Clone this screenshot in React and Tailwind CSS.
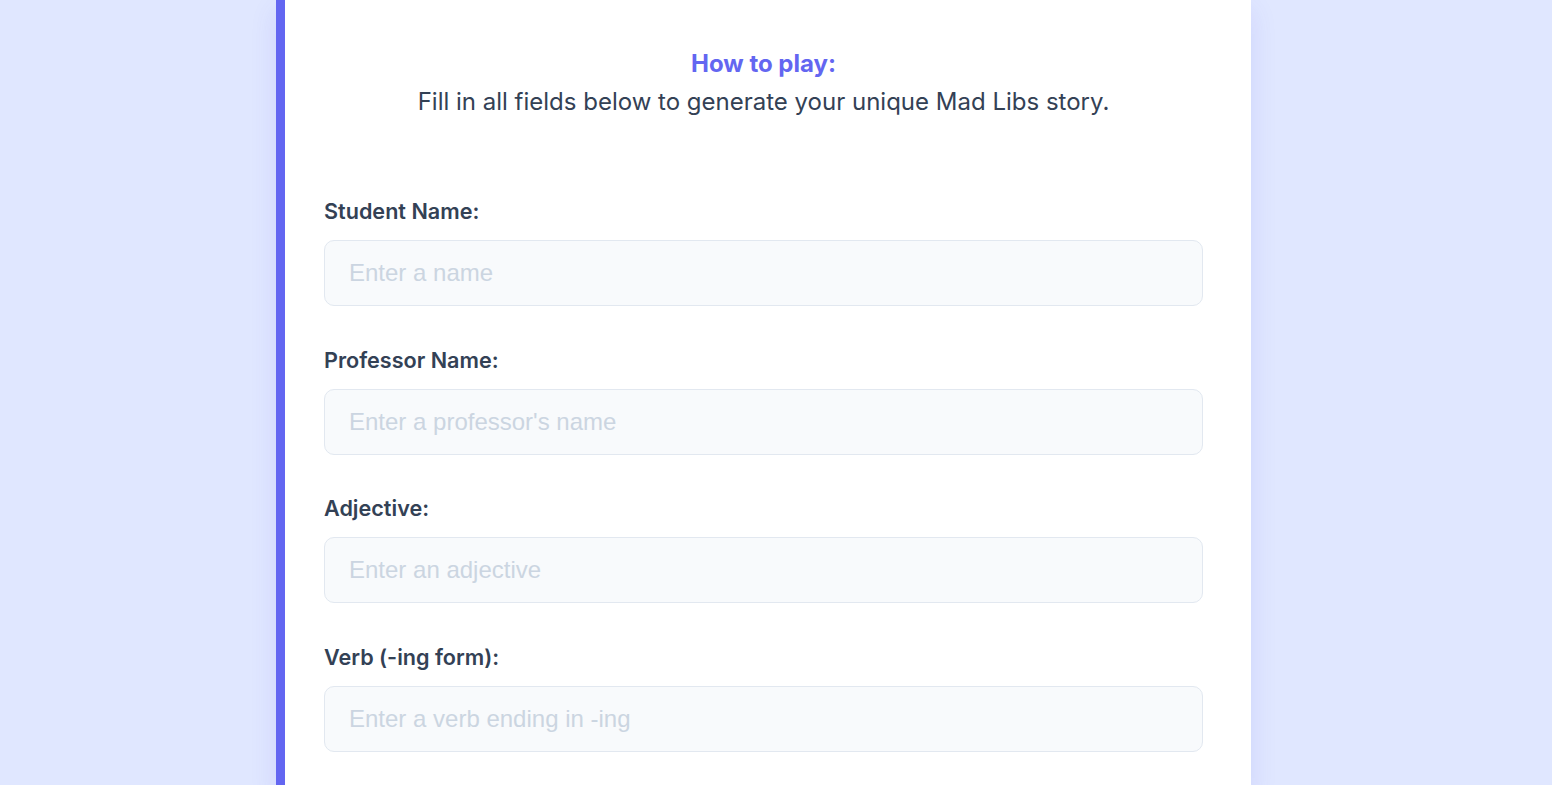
import React from "react";

const fields = [
  { label: "Student Name:", ph: "Enter a name" },
  { label: "Professor Name:", ph: "Enter a professor's name" },
  { label: "Adjective:", ph: "Enter an adjective" },
  { label: "Verb (-ing form):", ph: "Enter a verb ending in -ing" },
];

export default function App() {
  return (
    <div className="min-h-screen bg-[#e0e7ff] font-['Inter',sans-serif] overflow-hidden">
      <div className="ml-[276px] w-[975px] min-h-[785px] bg-white border-l-[9px] border-[#6366f1] pl-[39px] pr-12 pt-[45px] pb-10 shadow-[0_10px_25px_rgba(79,70,229,0.12)]">
        <div className="text-center">
          <h2 className="text-[24px] leading-[38px] font-bold text-[#6366f1]">How to play:</h2>
          <p className="text-[24px] leading-[38px] text-[#334155]">
            Fill in all fields below to generate your unique Mad Libs story.
          </p>
        </div>
        <div className="mt-[75px] flex flex-col gap-[38.5px]">
          {fields.map((f) => (
            <div key={f.label} className="flex flex-col gap-[14px]">
              <label className="text-[21.6px] leading-[30px] font-semibold text-[#334155]">{f.label}</label>
              <input
                type="text"
                placeholder={f.ph}
                className="h-[66px] w-full rounded-[10px] border border-[#e2e8f0] bg-[#f8fafc] px-6 text-[24px] font-['Liberation_Sans',Arial,sans-serif] text-[#334155] placeholder:text-[#cbd5e1] outline-none"
              />
            </div>
          ))}
        </div>
      </div>
    </div>
  );
}
